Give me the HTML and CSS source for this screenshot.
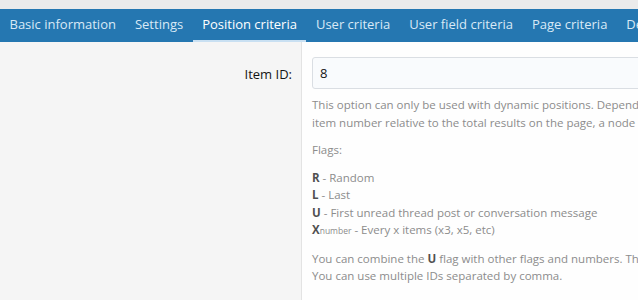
FILE: index.html
```html
<!DOCTYPE html>
<html lang="en">
<head>
    <meta charset="UTF-8">
    <meta name="viewport" content="width=device-width, initial-scale=1.0">
    <title>Edit ad - Position criteria</title>
    <link rel="stylesheet" href="styles.css">
</head>
<body>
    <div class="tabs">
        <a class="tab" href="#">Basic information</a>
        <a class="tab" href="#">Settings</a>
        <a class="tab active" href="#">Position criteria</a>
        <a class="tab" href="#">User criteria</a>
        <a class="tab" href="#">User field criteria</a>
        <a class="tab" href="#">Page criteria</a>
        <a class="tab" href="#">Devices</a>
    </div>

    <div class="form-row">
        <div class="form-label">Item ID:</div>
        <div class="form-input">
            <input type="text" class="input" value="8">
            <div class="explain">
                <p>This option can only be used with dynamic positions. Depending on the position, the item ID can be a post number,<br>
                item number relative to the total results on the page, a node ID or a resource number.</p>
                <p>Flags:</p>
                <p>
                    <b>R</b> - Random<br>
                    <b>L</b> - Last<br>
                    <b>U</b> - First unread thread post or conversation message<br>
                    <b>X</b><span class="sub">number</span> - Every x items (x3, x5, etc)
                </p>
                <p>You can combine the <b>U</b> flag with other flags and numbers. This way the ad shows after the first unread item.<br>
                You can use multiple IDs separated by comma.</p>
            </div>
        </div>
    </div>
</body>
</html>
```
FILE: styles.css
```css
body {
    margin: 0;
    padding-top: 9px;
    background-color: #ebebeb;
    font-family: "Open Sans", "Noto Sans", Arial, sans-serif;
    overflow: hidden;
    height: 300px;
}
.tabs {
    display: flex;
    background-color: #2577b1;
    height: 33px;
    white-space: nowrap;
    overflow: hidden;
}
.tab {
    display: block;
    padding: 0 9.5px;
    line-height: 31px;
    border-bottom: 2px solid transparent;
    color: #d9e9f6;
    font-size: 13px;
    text-decoration: none;
}
.tab.active {
    color: #fff;
    border-bottom-color: #c9e0f2;
}
.form-row {
    display: grid;
    grid-template-columns: 302px 1fr;
    height: 258px;
}
.form-label {
    background-color: #f5f5f5;
    border-right: 1px solid #e3e3e3;
    text-align: right;
    padding: 23px 9px 0 0;
    font-size: 13px;
    color: #141414;
}
.form-input {
    background-color: #fefefe;
    padding: 15px 0 0 10px;
    overflow: hidden;
}
.input {
    display: block;
    box-sizing: border-box;
    width: 600px;
    height: 32px;
    padding: 0 7px;
    border: 1px solid #dadee3;
    border-radius: 3px;
    background-color: #f9fbfd;
    font-family: inherit;
    font-size: 13px;
    color: #141414;
}
.explain {
    width: 700px;
    margin-top: 7px;
    font-size: 11.5px;
    line-height: 17.5px;
    color: #8c8c8c;
}
.explain p {
    margin: 0 0 10px;
}
.explain b {
    color: #505050;
}
.sub {
    font-size: 8.5px;
}
```
